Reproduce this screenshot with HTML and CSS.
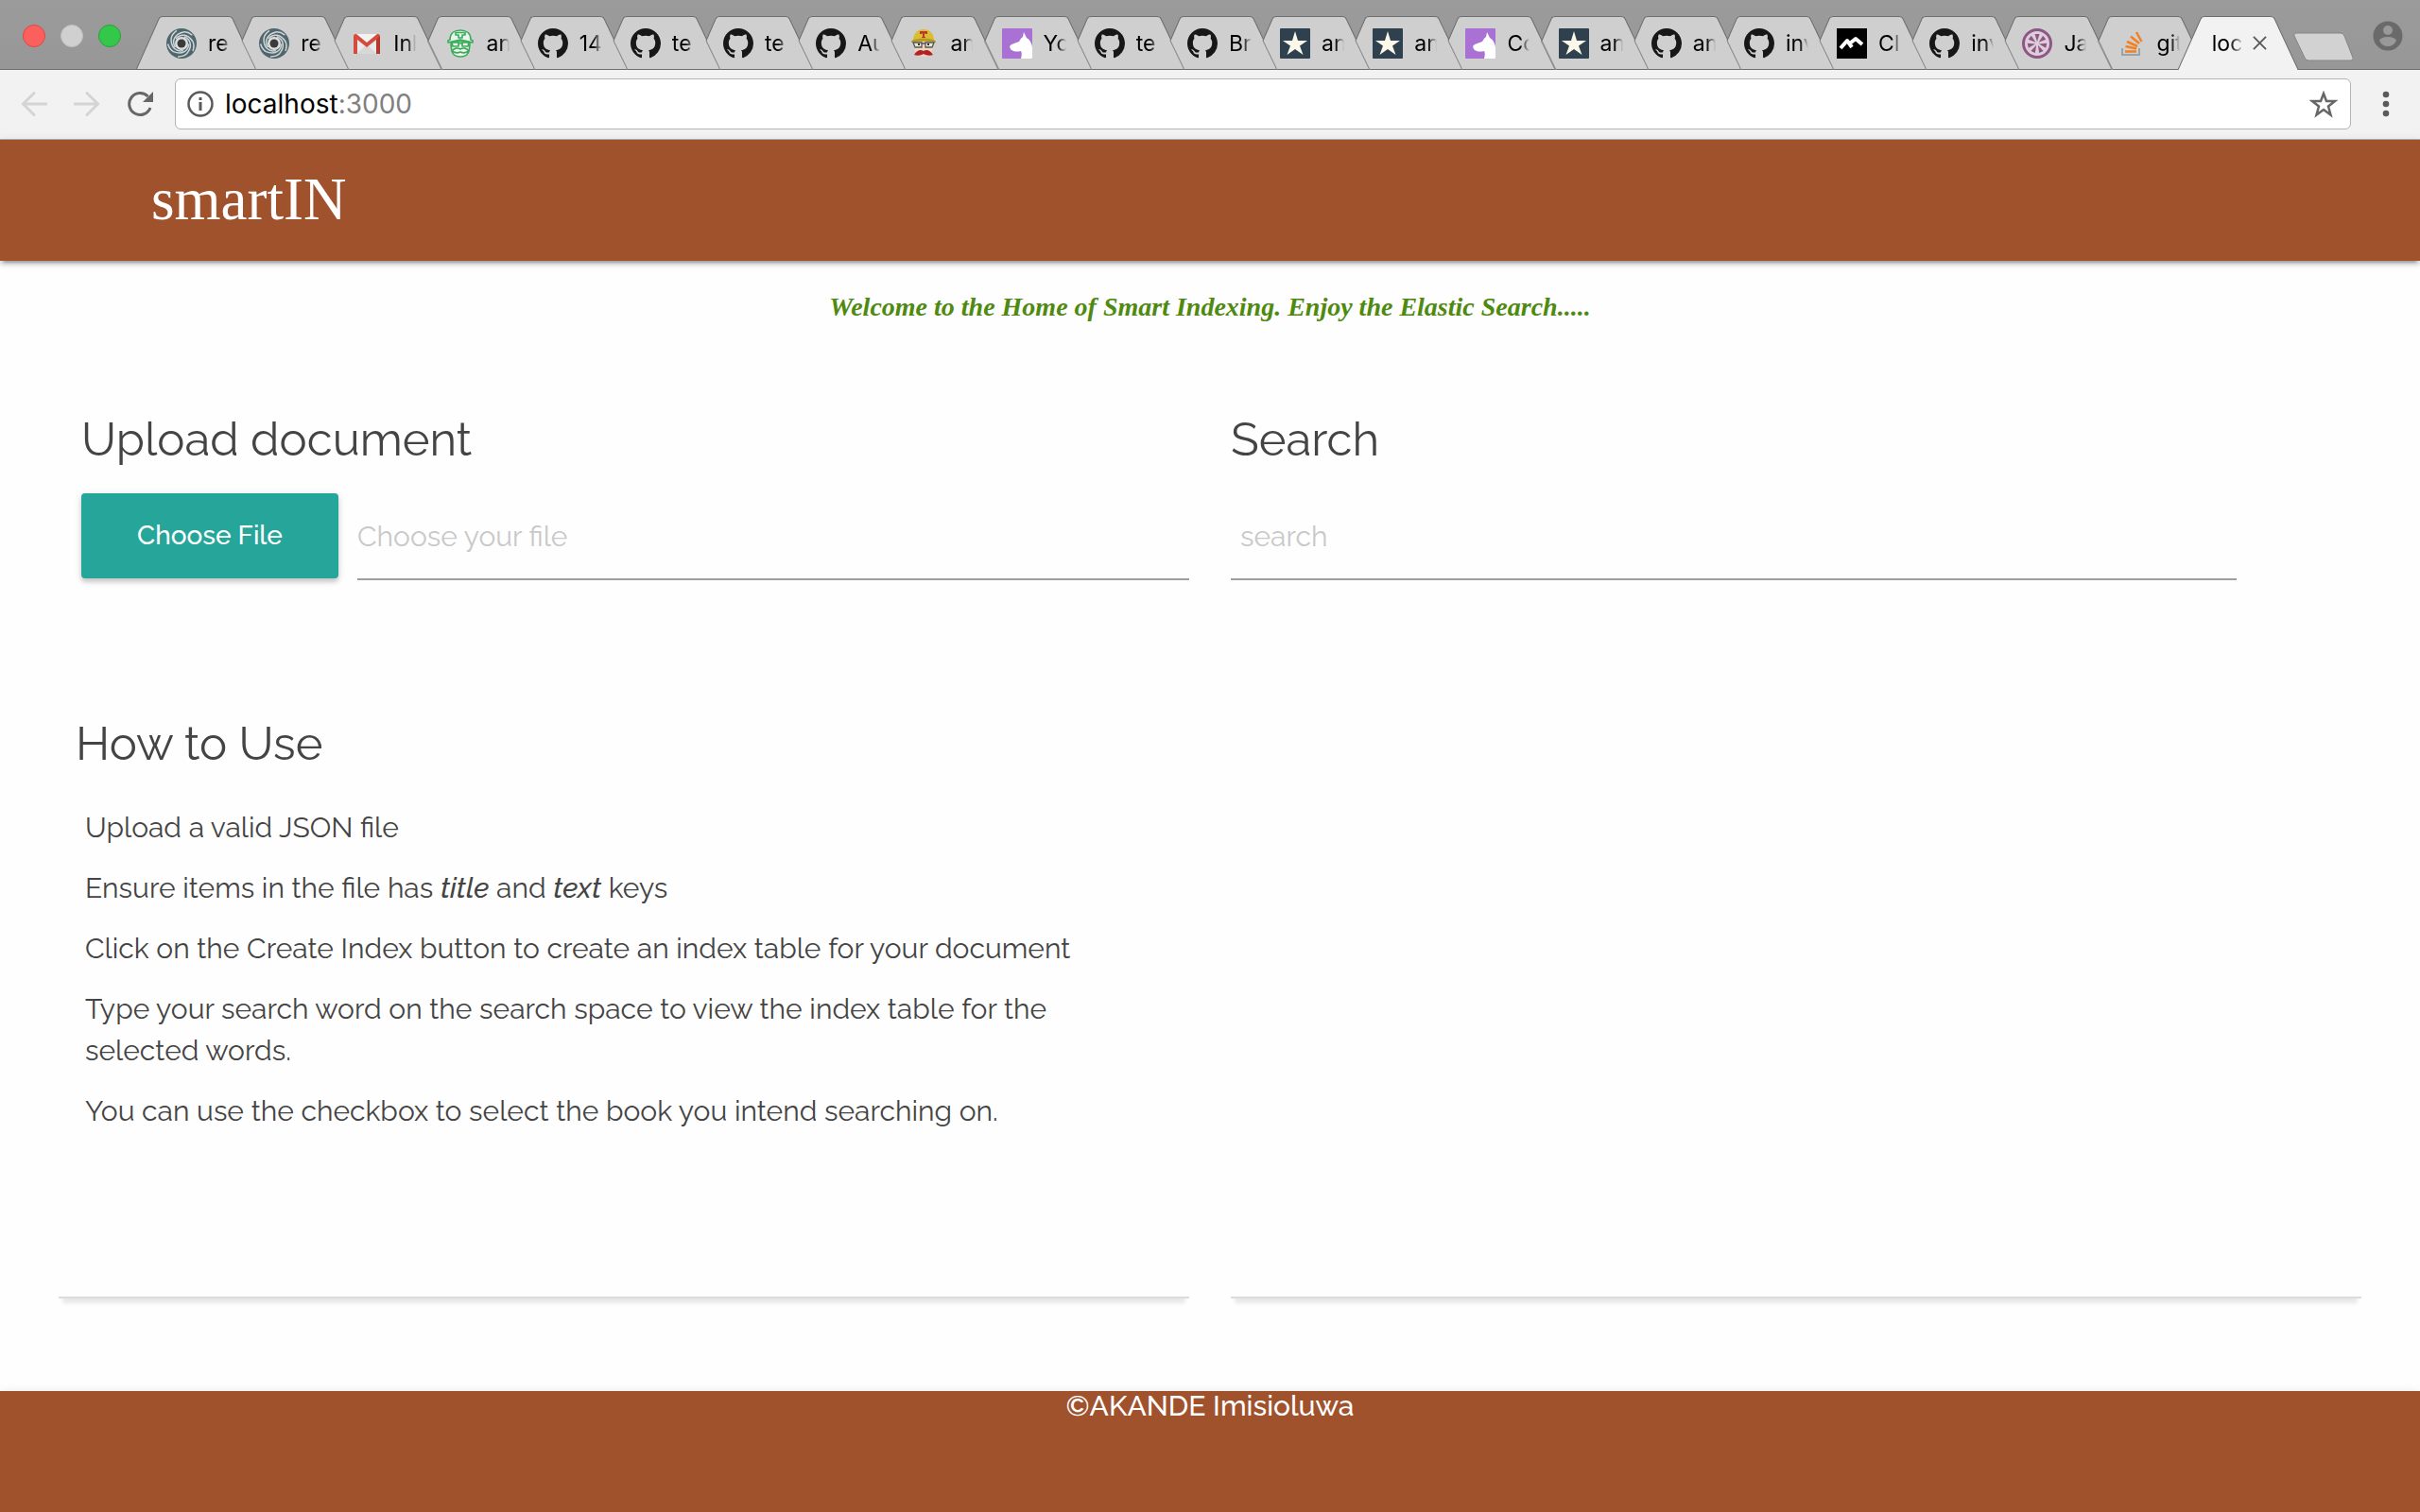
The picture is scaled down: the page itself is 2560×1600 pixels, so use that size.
FILE: index.html
```html
<!DOCTYPE html>
<html lang="en">
<head>
<meta charset="utf-8">
<title>smartIN</title>
<link rel="stylesheet" href="styles.css">
</head>
<body>
<svg class="sprite" aria-hidden="true">
  <symbol id="shape-first" viewBox="0 0 128 57" preserveAspectRatio="none">
    <path fill="#cfcfcf" d="M0 57 24 3Q25 0 28 0H98Q101 0 102 3L127 57Z"/>
    <path fill="none" stroke="#6e6e6e" d="M0 57 24 3Q25 .5 28 .5H98Q101 .5 102 3L127 57M0 56.500H128"/>
  </symbol>
  <symbol id="shape-tab" viewBox="0 0 128 57" preserveAspectRatio="none">
    <path fill="#cfcfcf" d="M14 26 24 3Q25 0 28 0H98Q101 0 102 3L127 57H29Z"/>
    <path fill="none" stroke="#6e6e6e" d="M14 26 24 3Q25 .5 28 .5H98Q101 .5 102 3L113 26M28 56.500H128"/>
    <path fill="none" stroke="#8e8e8e" d="M14 26 29 57M112 26 127 57"/>
  </symbol>
  <symbol id="shape-active" viewBox="0 0 128 57" preserveAspectRatio="none">
    <path fill="#f2f2f2" d="M0 57 24 3Q25 0 28 0H98Q101 0 102 3L127 57Z"/>
    <path fill="none" stroke="#6e6e6e" d="M0 57 24 3Q25 .5 28 .5H98Q101 .5 102 3L127 57"/>
  </symbol>
  <symbol id="swirl" viewBox="0 0 32 32">
    <circle cx="16" cy="16" r="16" fill="#4f666e"/>
    <g fill="none" stroke="#cfd4d5" stroke-width="1.500">
      <path id="arm" d="M10 11C15 5 23 6 28 14Q30 18 28 24"/>
      <use href="#arm" transform="rotate(72 16 16)"/><use href="#arm" transform="rotate(144 16 16)"/>
      <use href="#arm" transform="rotate(216 16 16)"/><use href="#arm" transform="rotate(288 16 16)"/>
    </g>
    <circle cx="16" cy="16" r="7" fill="#dcdfdf"/>
    <circle cx="16" cy="16" r="4.500" fill="#3b3b3b"/>
  </symbol>
  <symbol id="gmail" viewBox="0 0 32 32">
    <rect x="2" y="6" width="28" height="21" rx="1" fill="#eaeaea"/>
    <path fill="#d8d8d8" d="M5 27 16 17 27 27Z"/>
    <path fill="#f3f3f3" d="M4 6H28L16 16Z"/>
    <path fill="#d54b3d" d="M2 8Q2 6 4 6H5L16 15 27 6H28Q30 6 30 8V27H26V12L16 20 6 12V27H2Z"/>
    <path fill="#b8372b" d="M26 12 30 8V27H26Z"/>
  </symbol>
  <symbol id="travis-green" viewBox="0 0 32 32">
    <g fill="#e9f5ec" stroke="#3aaa5a" stroke-width="1.600" stroke-linejoin="round">
      <path d="M6 14C6 27 9 30 16 30S26 27 26 14Z"/>
      <path d="M5 12C5 5 10 2 16 2S27 5 27 12L29 13V15L16 12 3 15V13Z"/>
      <path d="M11 4.500H21V7H18V10H14V7H11Z"/>
      <path d="M7 15H14V19H8ZM18 15H25L24 19H18ZM14 16H18"/>
      <path d="M16 22C13 20 9 21 7 24 10 26 14 26 16 25 18 26 22 26 25 24 23 21 19 20 16 22Z"/>
    </g>
  </symbol>
  <symbol id="travis" viewBox="0 0 32 32">
    <path fill="#f0d5b8" d="M6 12H26V20Q25 30 16 30 7 30 6 20Z"/>
    <path fill="#d9bd33" d="M5 13C5 5 10 1 16 1S27 5 27 13L29 14V15Q16 12 3 15V14Z"/>
    <path fill="#b89a22" d="M5 12Q16 9 27 12L29 14V15Q16 12 3 15V14Z"/>
    <path fill="#c3352b" d="M12 3H20V6H18V5.500H17V9H18V10H14V9H15V5.500H14V6H12Z"/>
    <g fill="#e8e8e0" stroke="#555" stroke-width="1.300"><path d="M5 15H14V20H7ZM18 15H27L25 20H18ZM14 16H18"/></g>
    <path fill="#333" d="M10 16H12V18H10ZM20 16H22V18H20Z"/>
    <path fill="#b3202a" d="M16 24C13 22 9 23 6 28 9 29 13 29 16 27 19 29 23 29 26 28 23 23 19 22 16 24Z"/>
  </symbol>
  <symbol id="wolf" viewBox="0 0 32 32">
    <rect width="32" height="32" rx="1" fill="#a871d3"/>
    <path fill="#fff" d="M23 4 26 10Q31 13 32 20V31Q32 32 31 32H20C21 28 21 26 20 24 16 25 12 25 9 22L8 19 10 17 18 14Q20 10 22 9Z"/>
  </symbol>
  <symbol id="github" viewBox="0 0 16 16">
    <path fill="#171717" d="M8 0C3.580 0 0 3.580 0 8c0 3.540 2.290 6.530 5.470 7.590.4.070.55-.17.55-.38 0-.19-.01-.82-.01-1.490-2.010.37-2.530-.49-2.690-.94-.09-.23-.48-.94-.82-1.130-.28-.15-.68-.52-.01-.53.63-.01 1.080.58 1.230.82.72 1.210 1.870.87 2.330.66.07-.52.28-.87.51-1.070-1.780-.2-3.640-.89-3.640-3.950 0-.87.31-1.590.82-2.150-.08-.2-.36-1.020.08-2.120 0 0 .67-.21 2.200.82.64-.18 1.320-.27 2-.27s1.360.09 2 .27c1.530-1.040 2.200-.82 2.200-.82.44 1.100.16 1.920.08 2.120.51.56.82 1.270.82 2.150 0 3.070-1.870 3.750-3.650 3.950.29.25.54.73.54 1.480 0 1.070-.01 1.930-.01 2.200 0 .21.15.46.55.38A8.010 8.010 0 0 0 16 8c0-4.420-3.580-8-8-8z"/>
  </symbol>
  <symbol id="star-tile" viewBox="0 0 32 32">
    <rect width="32" height="32" rx="1" fill="#2f404e"/>
    <path fill="#fbf8ea" d="M16 3 19 13H29L21 18.500 24.500 28 16 22 7.500 28 11 18.500 3 13H13Z"/>
  </symbol>
  <symbol id="peaks" viewBox="0 0 32 32">
    <rect width="32" height="32" fill="#000"/>
    <path fill="none" stroke="#fff" stroke-width="4" stroke-linejoin="round" d="M4 21 11 13 16 20M15 15 20 11 27 17"/>
  </symbol>
  <symbol id="jasmine" viewBox="0 0 32 32">
    <circle cx="16" cy="16" r="14.500" fill="#dccfda" stroke="#8f5585" stroke-width="3"/>
    <g fill="#8f5585">
      <path id="petal" d="M16 14 13.500 6H18.500Z"/>
      <use href="#petal" transform="rotate(51 16 16)"/><use href="#petal" transform="rotate(103 16 16)"/>
      <use href="#petal" transform="rotate(154 16 16)"/><use href="#petal" transform="rotate(206 16 16)"/>
      <use href="#petal" transform="rotate(257 16 16)"/><use href="#petal" transform="rotate(309 16 16)"/>
    </g>
  </symbol>
  <symbol id="stack" viewBox="0 0 32 32">
    <path fill="none" stroke="#9aa2aa" stroke-width="2" d="M7 21V28H25V21"/>
    <path fill="none" stroke="#f48024" stroke-width="2.500" d="M10 24.500H22M10.500 19 22 21.500M12 14 23 19M16 8.500 25 16M22 4 27.500 14"/>
  </symbol>
</svg>

<header class="browser">
  <div class="strip">
    <div class="lights">
      <button class="light light-close" aria-label="Close window"></button>
      <button class="light" aria-label="Minimise window"></button>
      <button class="light light-zoom" aria-label="Zoom window"></button>
    </div>
    <nav class="tabs" aria-label="Tabs">
      <button class="tab"><svg class="shape"><use href="#shape-first"/></svg><svg class="icon"><use href="#swirl"/></svg><span class="name">re</span></button>
      <button class="tab"><svg class="shape"><use href="#shape-tab"/></svg><svg class="icon"><use href="#swirl"/></svg><span class="name">re</span></button>
      <button class="tab"><svg class="shape"><use href="#shape-tab"/></svg><svg class="icon"><use href="#gmail"/></svg><span class="name">Inb</span></button>
      <button class="tab"><svg class="shape"><use href="#shape-tab"/></svg><svg class="icon"><use href="#travis-green"/></svg><span class="name">an</span></button>
      <button class="tab"><svg class="shape"><use href="#shape-tab"/></svg><svg class="icon"><use href="#github"/></svg><span class="name">14</span></button>
      <button class="tab"><svg class="shape"><use href="#shape-tab"/></svg><svg class="icon"><use href="#github"/></svg><span class="name">te</span></button>
      <button class="tab"><svg class="shape"><use href="#shape-tab"/></svg><svg class="icon"><use href="#github"/></svg><span class="name">te</span></button>
      <button class="tab"><svg class="shape"><use href="#shape-tab"/></svg><svg class="icon"><use href="#github"/></svg><span class="name">Au</span></button>
      <button class="tab"><svg class="shape"><use href="#shape-tab"/></svg><svg class="icon"><use href="#travis"/></svg><span class="name">an</span></button>
      <button class="tab"><svg class="shape"><use href="#shape-tab"/></svg><svg class="icon"><use href="#wolf"/></svg><span class="name">Yo</span></button>
      <button class="tab"><svg class="shape"><use href="#shape-tab"/></svg><svg class="icon"><use href="#github"/></svg><span class="name">te</span></button>
      <button class="tab"><svg class="shape"><use href="#shape-tab"/></svg><svg class="icon"><use href="#github"/></svg><span class="name">Br</span></button>
      <button class="tab"><svg class="shape"><use href="#shape-tab"/></svg><svg class="icon"><use href="#star-tile"/></svg><span class="name">an</span></button>
      <button class="tab"><svg class="shape"><use href="#shape-tab"/></svg><svg class="icon"><use href="#star-tile"/></svg><span class="name">an</span></button>
      <button class="tab"><svg class="shape"><use href="#shape-tab"/></svg><svg class="icon"><use href="#wolf"/></svg><span class="name">Co</span></button>
      <button class="tab"><svg class="shape"><use href="#shape-tab"/></svg><svg class="icon"><use href="#star-tile"/></svg><span class="name">an</span></button>
      <button class="tab"><svg class="shape"><use href="#shape-tab"/></svg><svg class="icon"><use href="#github"/></svg><span class="name">an</span></button>
      <button class="tab"><svg class="shape"><use href="#shape-tab"/></svg><svg class="icon"><use href="#github"/></svg><span class="name">inv</span></button>
      <button class="tab"><svg class="shape"><use href="#shape-tab"/></svg><svg class="icon"><use href="#peaks"/></svg><span class="name">Cl</span></button>
      <button class="tab"><svg class="shape"><use href="#shape-tab"/></svg><svg class="icon"><use href="#github"/></svg><span class="name">inv</span></button>
      <button class="tab"><svg class="shape"><use href="#shape-tab"/></svg><svg class="icon"><use href="#jasmine"/></svg><span class="name">Ja</span></button>
      <button class="tab"><svg class="shape"><use href="#shape-tab"/></svg><svg class="icon"><use href="#stack"/></svg><span class="name">git</span></button>
      <button class="tab tab-active"><svg class="shape"><use href="#shape-active"/></svg><span class="name">loc</span><svg class="cross" viewBox="0 0 16 16"><path d="M1 1 15 15M15 1 1 15"/></svg></button>
    </nav>
    <button class="new-tab" aria-label="New tab"><svg viewBox="0 0 64 32"><path fill="#d2d2d2" stroke="#858585" d="M4 1H50Q53 1 54 4L63 27Q64 30 61 30H16Q13 30 12 27L1 4Q0 1 4 1Z"/></svg></button>
    <button class="profile" aria-label="Profile"><svg viewBox="0 0 32 32"><circle cx="16" cy="16" r="15.500" fill="#6a6a6a"/><circle cx="16" cy="10" r="5" fill="#999"/><path fill="#999" d="M7 21Q9 17 16 17T25 21Q22 27 16 27T7 21Z"/></svg></button>
  </div>
  <div class="toolbar">
    <button class="tool" aria-label="Back"><svg viewBox="0 0 28 28"><path class="faint" d="M27 14H3M14 2.500 2.500 14 14 25.500"/></svg></button>
    <button class="tool" aria-label="Forward"><svg viewBox="0 0 28 28"><path class="faint" d="M1 14H25M14 2.500 25.500 14 14 25.500"/></svg></button>
    <button class="tool" aria-label="Reload"><svg viewBox="0 0 28 28"><path class="line" d="M25 18A11.500 11.500 0 1 1 22.500 6"/><path fill="#666" d="M28 1V12H17Z"/></svg></button>
    <div class="omnibox">
      <svg class="info" viewBox="0 0 28 28"><circle cx="14" cy="14" r="12.500" fill="none" stroke="#5a5a5a" stroke-width="2.500"/><path fill="#5a5a5a" d="M12.500 7H15.500V10H12.500ZM12.500 12H15.500V21H12.500Z"/></svg>
      <span class="address">localhost<span class="port">:3000</span></span>
      <button class="bookmark" aria-label="Bookmark this page"><svg viewBox="0 0 30 30"><path fill="none" stroke="#666" stroke-width="2.500" d="M15 4 18 12H27L20 17.500 22.500 26.500 15 21 7.500 26.500 10 17.500 3 12H12Z"/></svg></button>
    </div>
    <button class="menu" aria-label="Menu"><svg viewBox="0 0 8 28"><g fill="#5a5a5a"><circle cx="4" cy="4" r="3.300"/><circle cx="4" cy="14" r="3.300"/><circle cx="4" cy="24" r="3.300"/></g></svg></button>
  </div>
</header>

<div class="page">
  <header class="navbar"><a class="brand" href="#">smartIN</a></header>
  <p class="welcome">Welcome to the Home of Smart Indexing. Enjoy the Elastic Search.....</p>
  <main class="columns">
    <section class="column">
      <form class="upload">
        <h2 class="heading">Upload document</h2>
        <div class="file-row">
          <button type="button" class="choose">Choose File</button>
          <input class="field" type="text" placeholder="Choose your file" aria-label="Choose your file">
        </div>
      </form>
      <div class="guide">
        <h2 class="heading">How to Use</h2>
        <ul class="steps">
          <li>Upload a valid JSON file</li>
          <li>Ensure items in the file has <b><i>title</i></b> and <b><i>text</i></b> keys</li>
          <li>Click on the Create Index button to create an index table for your document</li>
          <li>Type your search word on the search space to view the index table for the selected words.</li>
          <li>You can use the checkbox to select the book you intend searching on.</li>
        </ul>
      </div>
    </section>
    <section class="column">
      <h2 class="heading"><label for="search">Search</label></h2>
      <input class="field field-search" id="search" type="text" placeholder="search">
    </section>
  </main>
  <footer class="footer">©AKANDE Imisioluwa</footer>
</div>
</body>
</html>
```
FILE: styles.css
```css
* { box-sizing: border-box; }

body {
  margin: 0;
  min-height: 100vh;
  display: flex;
  flex-direction: column;
  background: #fefefe;
  color: #444;
  font: 400 30px/44px Raleway, Lato, sans-serif;
}

button {
  padding: 0;
  border: 0;
  background: none;
  color: inherit;
  font: inherit;
}

svg { display: block; }

.sprite { position: absolute; width: 0; height: 0; }

/* Browser window */

.browser { font: 400 23px/32px Inter, sans-serif; color: #000; }

.strip {
  display: flex;
  align-items: flex-end;
  height: 74px;
  padding: 0 18px 0 24px;
  background: linear-gradient(#9b9b9b, #979797);
  box-shadow: inset 0 -1px #6e6e6e;
}

.lights { display: flex; gap: 16px; margin: 0 16px 24px 0; }

.light {
  width: 24px;
  height: 24px;
  border: 1px solid #c0c0c0;
  border-radius: 50%;
  background: #d0d0d0;
}

.light-close { background: #fc605c; border-color: #dd4744; }
.light-zoom { background: #34c84a; border-color: #27a13a; }

.tabs { flex: 1; display: flex; min-width: 0; }

.tab {
  position: relative;
  flex: 1;
  display: flex;
  align-items: center;
  gap: 12px;
  min-width: 0;
  height: 57px;
  padding-left: 32px;
}

.tab + .tab { margin-left: -30px; }

.shape { position: absolute; inset: 0; width: 100%; height: 57px; }

.icon { position: relative; flex: none; width: 32px; height: 32px; }

.name {
  position: relative;
  width: 24px;
  overflow: hidden;
  white-space: nowrap;
  text-align: left;
  -webkit-mask-image: linear-gradient(to right, #000 60%, transparent);
  mask-image: linear-gradient(to right, #000 60%, transparent);
}

.tab-active .name { width: 38px; padding-left: 4px; }

.cross {
  position: relative;
  width: 15px;
  height: 15px;
  fill: none;
  stroke: #5a5a5a;
  stroke-width: 2;
}

.tab-active { gap: 9px; }

.new-tab { width: 64px; margin: 0 20px 8px -6px; }

.profile { width: 32px; margin-bottom: 20px; }

.toolbar {
  display: flex;
  align-items: center;
  height: 74px;
  padding: 0 32px 2px 22px;
  background: #f2f2f2;
  border-bottom: 1px solid #adadad;
}

.tool { width: 28px; margin-right: 28px; }

.faint, .line { fill: none; stroke: #d4d4d4; stroke-width: 3; stroke-linecap: round; }
.line { stroke: #666; stroke-linecap: butt; }

.omnibox {
  flex: 1;
  display: flex;
  align-items: center;
  height: 54px;
  margin-right: 33px;
  margin-left: -5px;
  padding: 0 13px 0 12px;
  border: 1px solid #b4b4b4;
  border-radius: 6px;
  background: #fff;
}

.info { width: 28px; }

.address { flex: 1; padding-left: 12px; font-size: 28px; }

.port { color: #808080; }

.bookmark { width: 30px; }

.menu { width: 8px; }

/* Page */

.page { flex: 1; display: flex; flex-direction: column; }

.navbar {
  padding: 0 160px 2px;
  background: #a0522d;
  box-shadow: 0 4px 4px rgba(0, 0, 0, .14), 0 2px 10px rgba(0, 0, 0, .12), 0 6px 2px -4px rgba(0, 0, 0, .2);
}

.brand {
  color: #fff;
  font: 63px/126px "Liberation Serif", serif;
  display: inline-block;
  vertical-align: top;
  text-decoration: none;
}

.welcome {
  margin: 27px 0 91px;
  color: #4f8a10;
  font: italic bold 28px/44px "Liberation Serif", serif;
  text-align: center;
}

.columns {
  flex: 1;
  display: grid;
  grid-template-columns: 1fr 1fr;
  gap: 44px;
  margin: 0 62px 98px;
}

.column {
  border-bottom: 2px solid #dcdcdc;
  box-shadow: 0 9px 4px -4px rgba(0, 0, 0, .09);
}

.upload { padding-left: 24px; }

.heading {
  margin: 0 0 30px;
  font-size: 49px;
  font-weight: 400;
  line-height: 54px;
}

.file-row { display: flex; gap: 20px; }

.choose {
  width: 272px;
  height: 90px;
  border-radius: 4px;
  background: #26a69a;
  box-shadow: 0 4px 4px rgba(0, 0, 0, .14), 0 2px 10px rgba(0, 0, 0, .12);
  color: #fff;
  font-size: 28px;
  font-weight: 500;
}

.field {
  flex: 1;
  min-width: 0;
  height: 92px;
  padding: 0;
  border: 0;
  border-bottom: 2px solid #9e9e9e;
  background: none;
  font: inherit;
  color: inherit;
}

.field::placeholder { color: #c9c9c9; opacity: 1; }

.field-search { width: 89%; padding-left: 10px; }

.guide { padding: 146px 90px 0 18px; }

.steps { margin: 0; padding: 0 0 0 10px; list-style: none; }

.steps li { padding: 10px 0; }

.steps b { font-weight: 500; }

.footer {
  min-height: 128px;
  background: #a0522d;
  box-shadow: 0 2px 10px rgba(0, 0, 0, .12);
  color: #fff;
  font-weight: 500;
  line-height: 32px;
  text-align: center;
}
```
